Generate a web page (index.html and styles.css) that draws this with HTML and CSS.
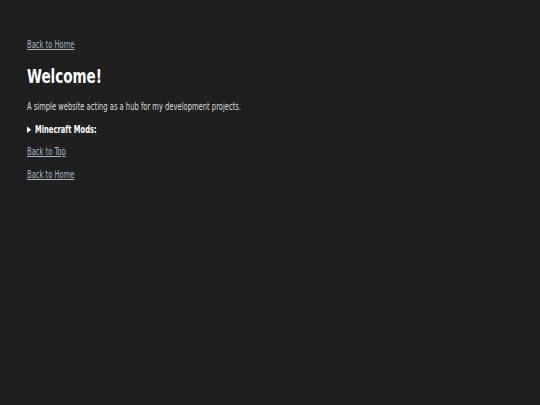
FILE: index.html
```html
<!DOCTYPE html>
<html>
<head>
<meta charset="utf-8">
<link rel="stylesheet" href="styles.css">
</head>
<body>
<main class="page">
  <div class="content">
    <a class="link" href="#">Back to Home</a>
    <h1 class="title">Welcome!</h1>
    <p class="intro">A simple website acting as a hub for my development projects.</p>
    <details class="mods">
      <summary class="mods-summary">Minecraft Mods:</summary>
    </details>
    <a class="link" href="#">Back to Top</a>
    <a class="link" href="#">Back to Home</a>
  </div>
</main>
</body>
</html>
```
FILE: styles.css
```css
html, body {
  margin: 0;
  padding: 0;
  background: #1f1f1f;
}
body {
  font-family: "DejaVu Sans Condensed", "DejaVu Sans", sans-serif;
  font-size: 10px;
  color: #dcdcdc;
}
.page {
  padding: 39px 27px;
}
.content {
  display: flex;
  flex-direction: column;
  align-items: flex-start;
  transform: scaleX(0.752);
  transform-origin: 0 0;
}
.link {
  color: #a3b6c4;
  text-decoration: underline;
  line-height: 11px;
  margin-bottom: 12px;
}
.title {
  font-size: 20px;
  font-weight: bold;
  color: #ffffff;
  margin: 2px 0 13px;
  line-height: 24px;
}
.intro {
  margin: 0 0 12px;
  line-height: 11px;
}
.mods {
  margin: 0 0 11px;
  line-height: 11px;
}
.mods-summary {
  font-weight: bold;
  color: #ffffff;
  cursor: pointer;
}
```
